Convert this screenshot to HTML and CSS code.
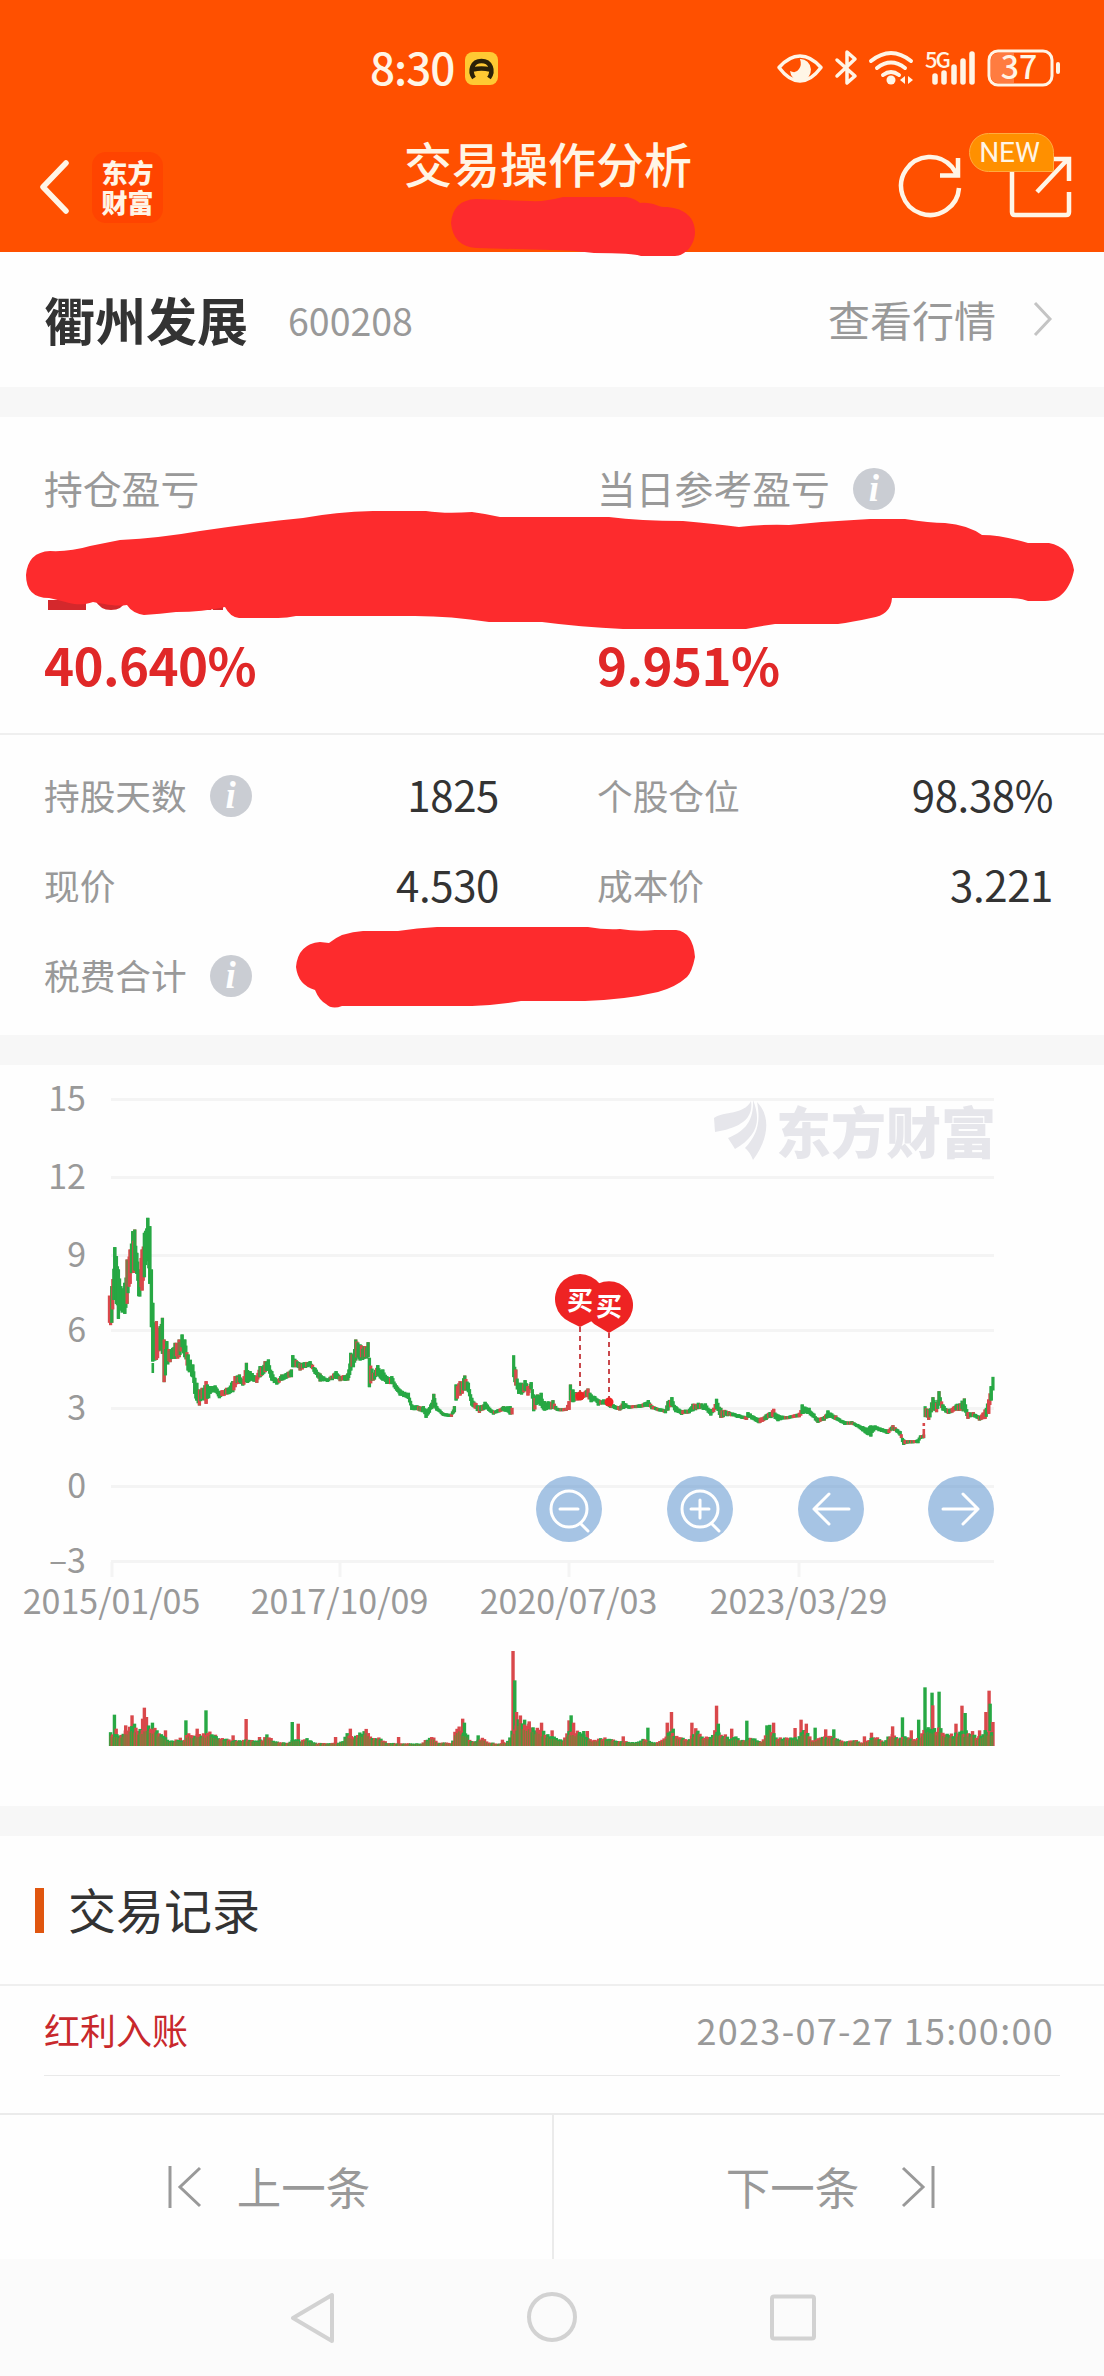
FILE: index.html
```html
<!DOCTYPE html>
<html lang="zh-CN">
<head>
    <meta charset="UTF-8">
    <meta name="viewport" content="width=device-width, initial-scale=1.0">
    <title>交易操作分析</title>
    <link rel="stylesheet" href="styles.css">
</head>
<body>
    <header>
        <div class="status-bar">
            <div class="clock">
                <span>8:30</span>
                <svg width="33" height="33" viewBox="0 0 33 33"><rect width="33" height="33" rx="8" fill="#ffc933"/><path d="M9 26C4 19 7 9 16.500 9S29 19 24 26M8 17.500q8.500-2 17 0" fill="none" stroke="#2b2108" stroke-width="4.500"/></svg>
            </div>
            <svg class="status-icons" width="290" height="44" viewBox="774 46 290 44" fill="none" stroke="#fff5e6" stroke-width="4" stroke-linecap="round" stroke-linejoin="round">
                <path d="M779 67.500Q789 56 800 56T821 67.500Q811 81 800 81T779 67.500Z" stroke-width="3.500"/>
                <path d="M800 59a10.500 11 0 1 1-10 12q6 3 9-2 3-4 1-10z" fill="#fff5e6" stroke="none"/>
                <path d="M837 60l18 16-8 7V52l8 7-18 17" stroke-width="3.500"/>
                <path d="M871 61q20-16 40 0M877 68q14-11 28 0M883 75q8-6 16 0"/>
                <circle cx="891" cy="80" r="4.500" fill="#fff5e6" stroke="none"/>
                <path d="M905 76v8l-5-4zM908 76v8l5-4z" fill="#fff5e6" stroke="none"/>
                <path d="M935 76v6M944 73v9M954 67v15M963 61v21M972 54v28" stroke-width="5.500"/>
                <rect x="989" y="51" width="63" height="34" rx="9" stroke-width="3"/>
                <path d="M998 53h16v30h-16q-7 0-7-7V60q0-7 7-7z" fill="#ff7c40" stroke="none"/>
                <path d="M1058 64v8" stroke-width="4"/>
                <text x="925" y="68" class="net-label">5G</text>
                <text x="1019" y="79" class="battery-label">37</text>
            </svg>
        </div>
        <div class="title-bar">
            <div class="title-left">
                <svg width="34" height="54" viewBox="0 0 34 54"><path d="M30 3L7 27l23 24" fill="none" stroke="#fff5e6" stroke-width="5.500" stroke-linecap="round" stroke-linejoin="round"/></svg>
                <div class="brand">东方<br>财富</div>
            </div>
            <h1>交易操作分析</h1>
            <div class="title-right">
                <svg width="66" height="66" viewBox="0 0 66 66" fill="none" stroke="#fff5e6" stroke-width="4.500"><path d="M61 34A29 29 0 1 1 54 13L60 22M42 21.500h18V4"/></svg>
                <div class="share">
                    <svg width="66" height="66" viewBox="0 0 66 66" fill="none" stroke="#fff5e6" stroke-width="4.500"><path d="M5 10v48q0 3 3 3h51q3 0 3-3V38M30 38L60 6M40 5h22v22"/></svg>
                    <span class="new-badge">NEW</span>
                </div>
            </div>
        </div>
    </header>

    <section class="stock">
        <h2>衢州发展</h2>
        <span class="code">600208</span>
        <a class="quote">查看行情
            <svg width="22" height="36" viewBox="0 0 22 36"><path d="M3 2l15 16L3 34" fill="none" stroke="#c4c4c4" stroke-width="3"/></svg>
        </a>
    </section>

    <section class="profit">
        <div class="profit-item">
            <div class="label"><span>持仓盈亏</span></div>
            <div class="percent">40.640%</div>
        </div>
        <div class="profit-item">
            <div class="label"><span>当日参考盈亏</span><i class="info">i</i></div>
            <div class="percent">9.951%</div>
        </div>
    </section>

    <section class="stats">
        <div class="stat"><span>持股天数</span><i class="info">i</i><b>1825</b></div>
        <div class="stat"><span>个股仓位</span><b>98.38%</b></div>
        <div class="stat"><span>现价</span><b>4.530</b></div>
        <div class="stat"><span>成本价</span><b>3.221</b></div>
        <div class="stat"><span>税费合计</span><i class="info">i</i></div>
    </section>

    <section class="chart">
        <svg id="chart" width="1104" height="741" viewBox="0 0 1104 741">
            <g id="grid"></g>
            <g class="watermark">
                <path d="M714 53C724 46 744 50 751 36C754 55 738 63 715 67zM728 73C742 67 754 59 753 35C762 57 756 72 735 84zM745 83C757 70 761 58 757 37C770 50 770 72 753 95Q750 87 745 83z"/>
                <text x="776" y="88">东方财富</text>
            </g>
            <g id="candles"></g>
            <g id="volume"></g>
            <g class="marker">
                <path class="dash" d="M580 262v68M609 268v68"/>
                <path d="M580 262l-10-5a25 25 0 1 1 20 0z"/>
                <path d="M609 268l-10-6a24 24 0 1 1 20 0z"/>
                <circle cx="580" cy="331" r="4.500"/>
                <circle cx="609" cy="337" r="4.500"/>
                <text x="580" y="245">买</text>
                <text x="609" y="251">买</text>
            </g>
            <g class="tools">
                <circle cx="569" cy="444" r="33"/>
                <circle cx="700" cy="444" r="33"/>
                <circle cx="831" cy="444" r="33"/>
                <circle cx="961" cy="444" r="33"/>
                <path d="M587 444a18 18 0 1 0-18 18 18 18 0 0 0 18-18M560 444h18M580 458l8 8"/>
                <path d="M718 444a18 18 0 1 0-18 18 18 18 0 0 0 18-18M691 444h18M700 435v18M711 458l8 8"/>
                <path d="M849 444h-35M829 429l-15 15 15 15"/>
                <path d="M943 444h35M963 429l15 15-15 15"/>
            </g>
        </svg>
    </section>

    <section class="records">
        <h3><span>交易记录</span></h3>
        <div class="record">
            <span class="type">红利入账</span>
            <time>2023-07-27 15:00:00</time>
        </div>
    </section>

    <nav class="pager">
        <a>
            <svg width="34" height="44" viewBox="0 0 34 44"><path d="M2 1v42M32 3L12 22l20 19"/></svg>
            <span>上一条</span>
        </a>
        <a>
            <span>下一条</span>
            <svg width="34" height="44" viewBox="0 0 34 44"><path d="M32 1v42M2 3l20 19L2 41"/></svg>
        </a>
    </nav>

    <footer class="system-nav">
        <svg width="1104" height="117" viewBox="0 0 1104 117">
            <path d="M332 36v46L293 59zM772 39.500q0-2 2-2h38q2 0 2 2v38q0 2-2 2h-38q-2 0-2-2z"/>
            <circle cx="552" cy="58" r="23"/>
        </svg>
    </footer>

    <!-- Brush strokes hiding the account numbers -->
    <svg class="brush" width="1104" height="1065" viewBox="0 0 1104 1065">
        <path class="under" d="M48 600h38v10H48zM95 600h32q-5 10-16 10t-16-10zM202 600h9v10h-9zM213 600h10v10h-10z"/>
        <path d="M451 223Q453 200 476 199L530 201Q545 202 563 197H626Q634 198 640 203C655 202 656 207 664 207C682 207 695 216 695 232C695 245 685 256 675 256H641Q634 253 594 253Q570 250 552 250L476 248Q453 246 451 223Z"/>
        <path d="M26 575Q28 552 50 551Q70 552 90 546L120 540Q160 538 200 531C235 526 270 521 303 518Q335 512 373 511H426Q445 514 472 512Q487 514 500 517H609Q640 521 683 521Q716 524 739 527Q765 524 789 525Q830 521 870 519H905Q930 523 945 523Q968 525 982 535Q1002 535 1028 543H1049Q1070 547 1074 570C1072 582 1064 601 1045 601H1028Q1020 598 1010 598H892Q891 615 871 618Q852 622 838 624H775Q762 626 746 629H623Q580 627 542 622H489Q451 616 415 616H296Q287 618 278 618H239Q230 617 225 607Q203 612 176 612Q160 614 144 615Q132 613 127 605C113 607 101 603 93 602C77 608 66 601 49 598Q26 598 26 575Z"/>
        <path d="M296 967Q298 944 320 942L329 943Q342 932 363 931H398Q417 928 437 927H588Q605 930 620 929Q637 932 655 930H676Q693 932 695 957Q692 972 687 977Q676 987 658 992Q623 1000 585 1001H521Q499 1005 472 1006H342Q332 1010 326 1004Q319 1000 315 990Q298 985 296 967Z"/>
    </svg>

    <script src="chart.js"></script>
</body>
</html>
```
FILE: styles.css
```css
* {
    margin: 0;
    padding: 0;
    box-sizing: border-box;
}
body {
    position: relative;
    width: 1104px;
    height: 2376px;
    overflow: hidden;
    font-family: "Noto Sans CJK SC", sans-serif;
    background-color: #fefefe;
    color: #333;
}
svg {
    display: block;
    flex: none;
}
header {
    height: 252px;
    background-color: #ff5000;
    color: #fff5e6;
}
.status-bar {
    display: flex;
    justify-content: space-between;
    align-items: center;
    height: 136px;
    padding: 0 40px 0 370px;
}
.clock {
    display: flex;
    align-items: center;
    gap: 11px;
    font-size: 44px;
    font-weight: 500;
    line-height: 60px;
    letter-spacing: -1px;
}
.clock span {
    margin-top: -4px;
}
.status-icons {
    overflow: visible;
}
.net-label, .battery-label {
    fill: #fff5e6;
    stroke: none;
}
.net-label {
    font-size: 22px;
    font-weight: 500;
    letter-spacing: -2px;
}
.battery-label {
    font-size: 32px;
    font-weight: 500;
    text-anchor: middle;
}
.title-bar {
    display: grid;
    grid-template-columns: 368px auto 1fr;
    height: 116px;
    padding: 0 31px 0 36px;
}
.title-left, .title-right {
    display: flex;
    align-items: center;
    height: 102px;
}
.title-left {
    gap: 22px;
}
.title-right {
    justify-content: flex-end;
    gap: 43px;
}
.brand {
    width: 71px;
    height: 71px;
    padding-top: 5px;
    border-radius: 14px;
    background-color: #ff4400;
    font-size: 26px;
    font-weight: 900;
    line-height: 30px;
    text-align: center;
}
h1 {
    font-size: 48px;
    font-weight: 500;
    line-height: 52px;
}
.share {
    position: relative;
}
.new-badge {
    position: absolute;
    top: -21px;
    left: -38px;
    width: 85px;
    height: 39px;
    border: 1px solid #ffab40;
    border-radius: 20px 20px 2px 20px;
    background-color: #ff9000;
    font-family: Roboto, sans-serif;
    font-size: 28px;
    line-height: 38px;
    text-align: center;
    padding-right: 4px;
}
.stock {
    display: flex;
    align-items: center;
    height: 135px;
    padding: 0 50px 0 44px;
}
h2 {
    font-size: 51px;
    font-weight: 700;
    line-height: 60px;
    margin-top: -2px;
}
.code {
    margin-left: 40px;
    font-size: 37.5px;
    line-height: 50px;
    color: #999;
}
.quote {
    display: flex;
    align-items: center;
    gap: 36px;
    margin-left: auto;
    margin-top: -2px;
    font-size: 42px;
    line-height: 50px;
    color: #999;
}
.profit {
    display: grid;
    grid-template-columns: 553px 1fr;
    height: 348px;
    padding: 42px 44px 0;
    border-top: 30px solid #f7f7f7;
    border-bottom: 2px solid #efefef;
}
.profit .label {
    display: flex;
    align-items: center;
    height: 60px;
    font-size: 38.8px;
    color: #999;
}
.info {
    display: inline-block;
    width: 42px;
    height: 42px;
    margin-left: 23px;
    border-radius: 50%;
    background-color: #cacdd3;
    color: #fefefe;
    font-family: "Liberation Serif", serif;
    font-size: 37px;
    font-weight: 700;
    line-height: 41px;
    text-align: center;
}
.percent {
    margin-top: 113px;
    font-size: 51px;
    font-weight: 700;
    line-height: 64px;
    letter-spacing: -0.6px;
    color: #e02828;
}
.stats {
    display: grid;
    grid-template-columns: 455px 456px;
    column-gap: 98px;
    grid-auto-rows: 90px;
    height: 300px;
    padding: 16px 43px 0 44px;
}
.stat {
    display: flex;
    align-items: center;
    font-size: 35.7px;
    color: #999;
}
.label span, .stat span, .record span, .record time, .pager span, h3 span {
    margin-top: -4px;
}
.stat b {
    margin-top: -5px;
    margin-left: auto;
    font-size: 42px;
    font-weight: 400;
    letter-spacing: -0.4px;
    color: #333;
}
.chart {
    height: 771px;
    border-top: 30px solid #f7f7f7;
}
.grid-line {
    stroke: #f4f4f4;
    stroke-width: 3;
}
.axis {
    font-size: 34px;
    fill: #999;
}
.watermark {
    fill: #e6e6eb;
}
.watermark text {
    font-size: 55px;
    font-weight: 900;
}
.marker {
    fill: #ee2323;
}
.marker text {
    font-size: 26px;
    font-weight: 700;
    fill: #fff;
    text-anchor: middle;
}
.dash {
    fill: none;
    stroke: #c9484c;
    stroke-width: 2;
    stroke-dasharray: 5 4;
}
.tools circle {
    fill: #6699d1;
    fill-opacity: 0.58;
}
.tools path {
    fill: none;
    stroke: #fff;
    stroke-width: 3;
    stroke-linecap: round;
    stroke-linejoin: round;
}
.records {
    height: 307px;
    border-top: 30px solid #f7f7f7;
}
h3 {
    display: flex;
    align-items: center;
    gap: 24px;
    height: 150px;
    padding-left: 35px;
    border-bottom: 2px solid #efefef;
    font-size: 48px;
    font-weight: 400;
}
h3::before {
    content: "";
    width: 9px;
    height: 45px;
    background-color: #e0560f;
}
.record {
    display: flex;
    justify-content: space-between;
    align-items: center;
    height: 90px;
    margin: 0 44px;
    padding-right: 6px;
    border-bottom: 1px solid #e9e9e9;
    font-size: 36px;
}
.record .type {
    color: #c8282c;
}
.record time {
    letter-spacing: 1.3px;
    color: #999;
}
.pager {
    display: grid;
    grid-template-columns: 554px 550px;
    height: 146px;
    border-top: 2px solid #ebebeb;
}
.pager a {
    display: flex;
    justify-content: center;
    align-items: center;
    gap: 42px;
    padding-left: 3px;
    font-size: 44.5px;
    color: #999;
}
.pager a:first-child {
    gap: 35px;
    padding: 0 14px 0 0;
    border-right: 2px solid #ebebeb;
}
.pager path {
    fill: none;
    stroke: #999;
    stroke-width: 3;
}
.system-nav {
    height: 117px;
    background-color: #fbfbfb;
}
.system-nav path, .system-nav circle {
    fill: none;
    stroke: #d2d2d2;
    stroke-width: 4;
    stroke-linejoin: round;
}
.brush {
    position: absolute;
    top: 0;
    left: 0;
    fill: #fd2b2d;
}
.brush .under {
    fill: #d4282c;
}
```
FILE: chart.js
```js
const NS = "http://www.w3.org/2000/svg";
const RED = "#d9484b";
const GREEN = "#27a844";

function draw(parent, tag, attrs, text) {
    const el = document.createElementNS(NS, tag);
    for (const key in attrs) {
        el.setAttribute(key, attrs[key]);
    }
    if (text) {
        el.textContent = text;
    }
    document.getElementById(parent).appendChild(el);
}

// Repeatable noise so the chart is the same on every load
let seed = 7;
function noise() {
    seed = (seed * 16807) % 2147483647;
    return seed / 2147483647;
}

// Axes
[[15, 34.5], [12, 112.5], [9, 190.5], [6, 265.5], [3, 343.5], [0, 421.5], [-3, 496.5]].forEach(([value, y]) => {
    draw("grid", "line", { x1: 111, x2: 994, y1: y, y2: y, class: "grid-line" });
    draw("grid", "text", { x: 86, y: y + 11, "text-anchor": "end", class: "axis" }, String(value).replace("-", "–"));
});
[["2015/01/05", 112], ["2017/10/09", 340], ["2020/07/03", 569], ["2023/03/29", 799]].forEach(([date, x]) => {
    draw("grid", "line", { x1: x, x2: x, y1: 497, y2: 512, class: "grid-line" });
    draw("grid", "text", { x: x - 0.5, y: 549, "text-anchor": "middle", class: "axis" }, date);
});

// Price range: x, high, low
const early = [[88,678,757],[95,650,757],[104,533,650],[109,560,700],[115,600,745],[122,650,720],[134,640,730],[141,570,700],[150,540,640],[158,485,600],[164,480,600],[170,550,610],[176,600,677],[186,540,660],[193,490,620],[203,445,560],[209,470,640],[214,600,770],[218,700,873],[224,790,870],[229,755,868],[240,770,840],[247,745,850],[252,810,935],[260,815,880],[270,845,875],[285,820,865],[297,810,860],[306,795,830],[314,810,860],[324,855,900],[338,885,920],[344,925,970],[350,940,990],[358,960,1005],[366,955,985],[378,935,1000],[390,950,970],[405,948,965],[418,965,983],[440,955,972],[458,935,965],[465,920,950],[478,915,935],[488,930,945],[499,880,935],[510,905,930],[530,920,937],[540,890,920],[555,875,905],[565,870,900],[575,905,930],[590,930,942],[605,915,930],[634,900,920],[638,857,890],[648,872,890],[660,880,900],[690,875,887],[705,895,910],[720,912,933],[742,928,932],[768,905,925],[780,920,932],[803,912,930],[812,850,900],[820,855,890],[827,810,870],[840,825,870],[852,830,865],[864,818,860],[868,865,950],[880,910,930],[893,887,915],[908,900,930],[920,920,940],[935,920,940],[960,960,975],[985,970,985],[995,1005,1018],[1030,1010,1025],[1038,1020,1042],[1055,1000,1015],[1061,973,1010],[1070,1010,1020],[1090,1030,1034],[1114,1033,1038],[1123,1010,1025],[1128,945,990],[1140,935,975],[1154,918,960],[1165,940,965],[1175,985,1005],[1198,1010,1027],[1215,997,1015],[1240,1025,1032],[1270,1010,1020],[1290,1010,1032],[1296,1015,1032]];
const middle = [[38,857,920],[44,900,945],[52,940,970],[60,940,972],[70,932,960],[78,950,975],[87,938,955],[94,975,1022],[105,975,1000],[115,970,1005],[124,995,1020],[148,992,1015],[160,1015,1020],[185,1015,1020],[193,995,1018],[197,945,990],[204,960,995],[215,970,990],[230,970,985],[246,957,980],[255,975,995],[265,980,990],[275,990,1005],[290,990,1000],[310,1000,1012],[335,1010,1020],[345,995,1015],[360,1008,1012],[390,1005,1012],[415,992,1008],[425,1008,1016],[463,1020,1028],[470,995,1020],[481,983,1005],[492,1010,1025],[508,1022,1033],[530,1018,1028],[540,1003,1022],[555,1000,1015],[575,1002,1018],[590,1020,1035],[598,1015,1025],[606,988,1015],[618,1015,1042],[640,1025,1035],[690,1040,1048],[694,1028,1040],[725,1045,1058],[745,1035,1048],[766,1018,1040],[778,1035,1052],[800,1040,1046],[838,1030,1040],[846,1005,1030],[865,1015,1030],[890,1045,1057],[908,1040,1050],[918,1023,1040],[940,1038,1048],[965,1055,1063],[985,1055,1060],[1015,1070,1082],[1038,1068,1098],[1050,1068,1078],[1085,1080,1090],[1100,1067,1078],[1120,1085,1095],[1130,1110,1123],[1145,1112,1118],[1170,1110,1118],[1177,1098,1105],[1186,1095,1103]];
const late = [[1190,1010,1040],[1200,1020,1048],[1212,983,1020],[1222,1000,1025],[1229,965,1000],[1240,1005,1020],[1255,1018,1030],[1280,1003,1020],[1300,987,1020],[1310,1028,1045],[1325,1028,1038],[1342,1040,1050],[1358,1020,1045],[1368,990,1030],[1375,950,990],[1380,922,960]];

function drawPrices(points, x0, scale) {
    for (let i = 0; i < points.length - 1; i++) {
        const [xa, highA, lowA] = points[i];
        const [xb, highB, lowB] = points[i + 1];
        const steps = Math.max(1, Math.round((xb - xa) / 3.5));
        const rising = highB + lowB < highA + lowA;
        for (let k = 0; k <= steps; k++) {
            const t = k / steps;
            const x = x0 + (xa + (xb - xa) * t) / scale;
            const size = (lowA + (lowB - lowA) * t - highA - (highB - highA) * t) / 3;
            const top = 4.5 + (highA + (highB - highA) * t) / 3 + (k && k < steps ? noise() * size * 0.3 : 0);
            const height = Math.max(3, size * (k && k < steps ? 0.8 : 1) + 1);
            const color = noise() < (rising ? 0.45 : 0.1) ? RED : GREEN;
            draw("candles", "rect", { x: x - 1.5, y: top, width: 3.2, height: height, fill: color });
        }
    }
}
drawPrices(early, 80, 3);
drawPrices(middle, 500, 2.8);
drawPrices(late, 500, 2.8);
[[152.5, 298, 10], [923.5, 358, 3], [923.5, 364, 9]].forEach(([x, y, h], i) => {
    draw("candles", "rect", { x: x - 1, y: y, width: 2.6, height: h, fill: i ? RED : GREEN });
});

// Volume: x, top, and a colour where a single bar stands out
const volume = [[313,1000],[325,943,"g"],[330,985,"r"],[338,1003],[350,1003],[357,975,"r"],[365,985],[375,945,"r"],[382,970,"g"],[390,990],[400,985],[410,922,"r"],[405,955,"r"],[416,950,"r"],[425,985],[433,967,"g"],[443,985],[452,1000],[460,998],[470,990,"r"],[480,1022],[500,1020],[512,1012,"r"],[523,1022],[528,960,"g"],[535,1000],[550,1008],[560,985,"r"],[570,1005],[585,930,"g"],[595,1000],[612,1003,"r"],[625,1015],[645,1018],[662,1005,"r"],[675,1022],[690,1022],[699,956,"r"],[705,1018],[725,1022],[737,1010,"r"],[745,1020],[760,1005],[775,1022],[800,1026],[820,1028],[830,965,"g"],[838,1015],[847,970,"r"],[855,1022],[867,1015],[882,1020,"g"],[900,1029],[935,1029],[953,1010,"r"],[963,1028],[975,1022],[988,1000],[995,985,"r"],[1003,1010],[1015,1008],[1028,997],[1044,990],[1053,1012],[1075,1014],[1100,1028],[1128,1030],[1132,1010,"r"],[1136,1030],[1195,1030],[1217,1016],[1232,1013],[1242,1028],[1285,1028],[1293,985],[1303,985],[1314,955,"r"],[1319,967,"g"],[1326,1005],[1335,1020],[1350,1025],[1358,1005,"g"],[1370,1012],[1385,1025],[1410,1030],[1427,1018,"r"],[1440,1026],[1450,1005],[1457,752,"r"],[1462,840,"g"],[1467,935,"r"],[1475,958],[1490,958,"g"],[1503,963,"r"],[1515,985],[1538,967,"r"],[1550,1000],[1568,990,"r"],
[1578,1015],[1600,1023],[1610,1000],[1616,960,"r"],[1622,945,"g"],[1629,967,"r"],[1637,995],[1650,998],[1658,992,"g"],[1668,992,"r"],[1680,1020],[1715,1015],[1750,1020],[1770,1008,"r"],[1785,1025],[1805,1027],[1830,1015],[1840,982,"g"],[1848,1025],[1865,1027],[1885,1018],[1895,967,"r"],[1900,992],[1907,935,"r"],[1912,985,"g"],[1920,1010],[1935,1015],[1955,1018],[1965,967,"r"],[1975,992],[1987,997],[1995,1012],[2018,1013],[2028,995],[2035,916,"r"],[2040,970,"g"],[2047,1005],[2060,1002,"r"],[2070,1015],[2078,985,"r"],[2088,1010],[2100,1020],[2115,1020],[2121,961,"g"],[2126,1015],[2145,1018],[2165,1025],[2178,975,"g"],[2186,982],[2197,967,"r"],[2205,1015],[2235,1015],[2258,983,"r"],[2265,1015],[2275,958,"r"],[2282,990],[2290,970,"r"],[2298,1000],[2308,1025],[2315,982,"g"],[2325,1015],[2335,1010],[2345,987,"r"],[2355,1010],[2368,987,"g"],[2376,1015],[2400,1025],[2425,1020],[2450,1027],[2455,1008,"r"],[2475,997,"r"],[2485,1010],[2510,1023],[2525,1010],[2535,978,"r"],[2542,1005],[2555,1015],[2563,951,"g"],[2570,1010],[2580,1015],[2588,990,"r"],[2598,1020],[2609,958,"g"],[2615,1010],[2622,995],[2627,861,"g"],[2633,975],[2641,985],[2647,877,"g"],[2649,915,"r"],[2653,990],[2667,874,"g"],[2673,990],[2682,1005],[2705,1005],[2715,970,"r"],[2723,1000],[2732,916,"r"],[2741,938,"g"],[2748,995],[2765,1000],[2775,1015],[2782,990,"r"],[2795,995],[2800,935,"r"],[2809,871,"r"],[2812,910,"g"],[2820,965,"r"]];

function bar(x, height, color) {
    draw("volume", "rect", { x: x - 1.7, y: 681 - height, width: 3.4, height: height, fill: color });
}
const base = volume.filter(point => !point[2]);
volume.filter(point => point[2]).forEach(([u, v, c]) => bar(u / 2.84, (1037 - v) / 3, c === "r" ? RED : GREEN));
for (let u = 314, i = 0; u < 2822; u += 6) {
    while (i < base.length - 2 && base[i + 1][0] < u) {
        i++;
    }
    const [ua, va] = base[i];
    const [ub, vb] = base[i + 1];
    const t = Math.min(1, Math.max(0, (u - ua) / (ub - ua)));
    const height = (1037 - va - (vb - va) * t) / 3 * (0.9 + noise() * 0.3);
    bar(u / 2.84, height, noise() < 0.5 ? RED : GREEN);
    draw("volume", "rect", { x: u / 2.84 - 1, y: 681 - height * 0.75, width: noise() < 0.7 ? 2.2 : 1.2, height: height * 0.75, fill: "#7a8038" });
}
```
